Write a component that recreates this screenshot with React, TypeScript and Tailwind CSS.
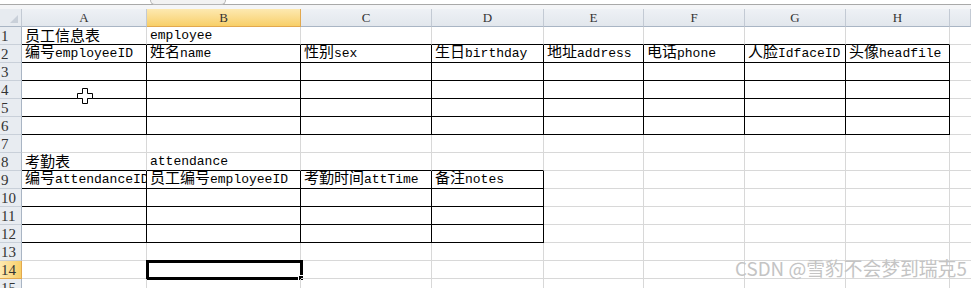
import React from 'react';

// column widths (px), last column fills the rest
const COLS = ['A', 'B', 'C', 'D', 'E', 'F', 'G', 'H', ''];
const ROWS = Array.from({ length: 15 }, (_, i) => i + 1);

const DATA: Record<string, string> = {
  '1-0': '员工信息表',
  '1-1': 'employee',
  '2-0': '编号employeeID',
  '2-1': '姓名name',
  '2-2': '性别sex',
  '2-3': '生日birthday',
  '2-4': '地址address',
  '2-5': '电话phone',
  '2-6': '人脸IdfaceID',
  '2-7': '头像headfile',
  '8-0': '考勤表',
  '8-1': 'attendance',
  '9-0': '编号attendanceID',
  '9-1': '员工编号employeeID',
  '9-2': '考勤时间attTime',
  '9-3': '备注notes',
};

// bordered ranges: [firstRow, lastRow, firstCol, lastCol]
const RANGES: [number, number, number, number][] = [
  [2, 6, 0, 7],
  [9, 12, 0, 3],
];

const inRange = (r: number, c: number) =>
  RANGES.some(([r1, r2, c1, c2]) => r >= r1 && r <= r2 && c >= c1 && c <= c2);

const blackBottom = (r: number, c: number) => inRange(r, c) || inRange(r + 1, c);
const blackRight = (r: number, c: number) => inRange(r, c) || inRange(r, c + 1);

const CellText: React.FC<{ s: string }> = ({ s }) => {
  const parts = s.split(/([\u4e00-\u9fff]+)/).filter(Boolean);
  return (
    <>
      {parts.map((p, i) =>
        /[\u4e00-\u9fff]/.test(p) ? (
          <span key={i} className="font-['Noto_Sans_CJK_SC',sans-serif] text-[15px]">{p}</span>
        ) : (
          <span key={i} className="font-['Liberation_Mono',monospace] text-[13px]">{p}</span>
        )
      )}
    </>
  );
};

const SelectBox = () => (
  <div className="absolute -left-[1px] -top-[1px] w-[157px] h-[20px] border-[3px] border-black">
    <div className="absolute -right-[4px] -bottom-[4px] w-[6px] h-[6px] bg-black border border-white" />
  </div>
);

const CrossCursor = () => (
  <svg className="absolute left-[77px] top-[88px]" width="16" height="16" viewBox="0 0 16 16">
    <path
      d="M5.5 0.5h5v5h5v5h-5v5h-5v-5h-5v-5h5z"
      fill="white"
      stroke="black"
      strokeWidth="1"
    />
  </svg>
);

export default function App() {
  return (
    <div className="relative w-full h-[288px] overflow-hidden bg-white select-none">
      {/* formula bar remnant */}
      <div className="flex h-[5px] border-b border-[#a9a9a9] bg-white">
        <div className="w-[150px]" />
        <div className="w-[76px] h-[5px] rounded-b-[6px] border border-t-0 border-[#b4b4b4] bg-[#f2f2f2]" />
      </div>
      <div className="h-[4px] bg-[#f4f5f7]" />

      <div className="grid grid-cols-[22px_125px_154px_131px_112px_100px_101px_101px_104px_1fr]">
        {/* column headers */}
        <div className="relative h-[18px] bg-[#e7ebf0] border-r border-b border-r-[#c3cad4] border-b-[#a9b5c4]">
          <svg className="absolute right-[3px] bottom-[3px]" width="8" height="8" viewBox="0 0 8 8">
            <path d="M8 0v8H0z" fill="#c9d0d9" />
          </svg>
        </div>
        {COLS.map((c, i) => (
          <div
            key={c + i}
            className={`h-[18px] flex items-center justify-center font-['Liberation_Serif',serif] text-[13px] text-[#333] border-b ${
              i === 1
                ? 'bg-gradient-to-b from-[#fde9b0] to-[#f8cf67] border-r border-r-[#e2a84e] border-b-[#e2a84e]'
                : 'bg-gradient-to-b from-[#eef1f5] to-[#e2e7ed] border-r border-r-[#c3cad4] border-b-[#a9b5c4]'
            }`}
          >
            {c}
          </div>
        ))}

        {/* rows */}
        {ROWS.map((r) => (
          <React.Fragment key={r}>
            <div
              className={`h-[18px] pl-[1px] leading-[18px] font-['Liberation_Serif',serif] text-[15px] text-[#333] border-r border-b ${
                r === 14
                  ? 'bg-gradient-to-r from-[#fde9b0] to-[#f8cf67] border-r-[#e2a84e] border-b-[#e2a84e]'
                  : 'bg-[#e8ecf1] border-r-[#a9b5c4] border-b-[#c9d0d9]'
              }`}
            >
              {r}
            </div>
            {COLS.map((_, c) => {
              const txt = DATA[`${r}-${c}`];
              return (
                <div
                  key={c}
                  className={`relative h-[18px] flex items-end pl-[3px] whitespace-nowrap text-black border-b ${
                    blackBottom(r, c) ? 'border-b-black' : 'border-b-[#d8d8d8]'
                  } ${c === 8 ? '' : 'border-r'} ${
                    blackRight(r, c) ? 'border-r-black' : 'border-r-[#d8d8d8]'
                  }`}
                >
                  <div className="overflow-hidden leading-[17px] w-full">{txt && <CellText s={txt} />}</div>
                  {r === 14 && c === 1 && <SelectBox />}
                </div>
              );
            })}
          </React.Fragment>
        ))}
      </div>

      <CrossCursor />

      {/* watermark */}
      <div className="absolute left-[735px] top-[256px] font-['Noto_Sans_CJK_SC',sans-serif] text-[18.8px] leading-[24px] text-[#c4c4c4] whitespace-nowrap">
        CSDN @雪豹不会梦到瑞克5
      </div>
    </div>
  );
}
